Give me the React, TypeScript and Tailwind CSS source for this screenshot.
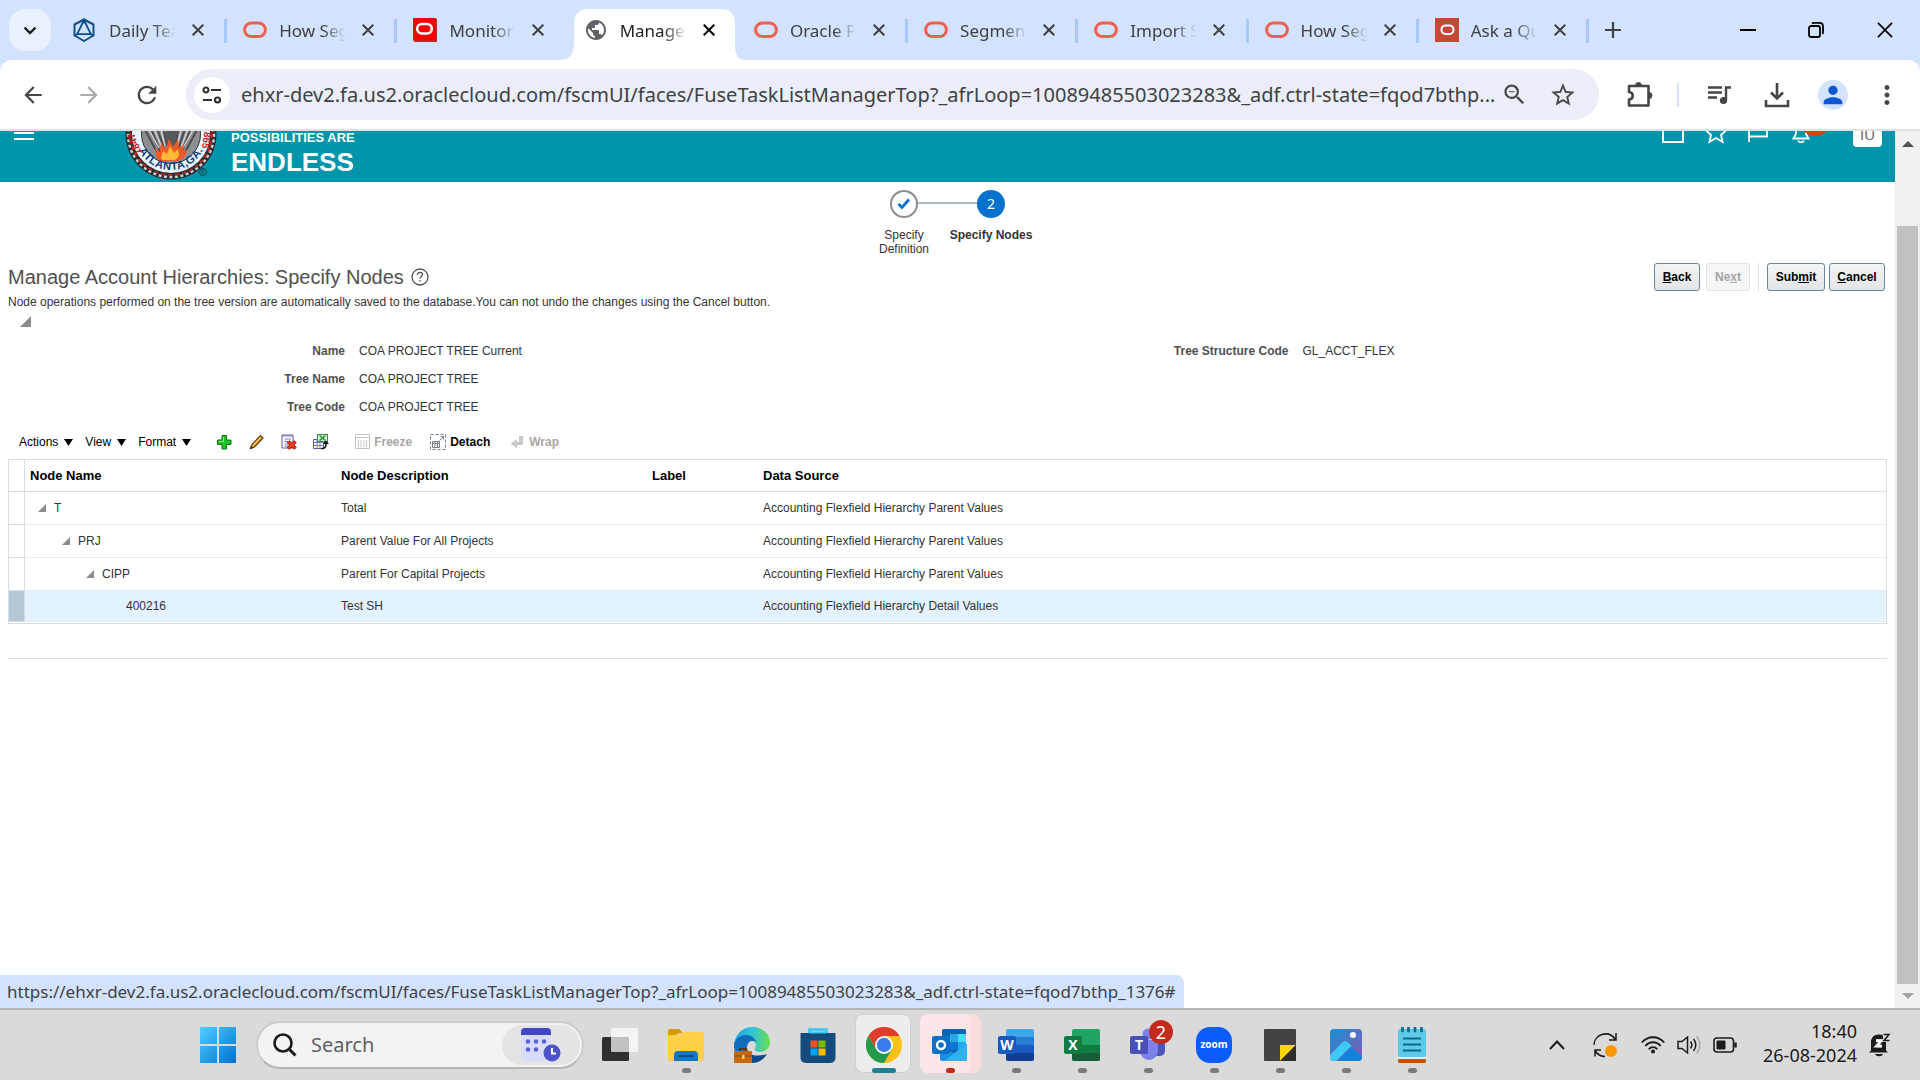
import React from "react";
import {
  MdArrowBack,
  MdArrowForward,
  MdRefresh,
  MdZoomOut,
  MdStarBorder,
  MdPerson,
  MdMoreVert,
  MdPublic,
} from "react-icons/md";

const UI = "font-['Noto_Sans',sans-serif]";
const PAGE_URL =
  "ehxr-dev2.fa.us2.oraclecloud.com/fscmUI/faces/FuseTaskListManagerTop?_afrLoop=10089485503023283&_adf.ctrl-state=fqod7bthp...";
const LINK_URL =
  "https://ehxr-dev2.fa.us2.oraclecloud.com/fscmUI/faces/FuseTaskListManagerTop?_afrLoop=10089485503023283&_adf.ctrl-state=fqod7bthp_1376#";

/* ---------- favicons ---------- */

const OracleRing = () => (
  <svg width="24" height="24" viewBox="0 0 24 24" fill="none">
    <rect x="1.600" y="5" width="20.800" height="13.600" rx="6.800" stroke="#f0604f" strokeWidth="3" />
  </svg>
);
const OracleTile = () => (
  <svg width="24" height="24" viewBox="0 0 24 24" fill="none">
    <rect x="1" y="1" width="23" height="23" fill="#a33" />
    <rect width="23" height="22.500" fill="#fa0000" />
    <rect x="4.200" y="6" width="14.600" height="9.500" rx="4.700" stroke="#fff" strokeWidth="2.600" />
  </svg>
);
const OracleSquare = () => (
  <svg width="24" height="24" viewBox="0 0 24 24" fill="none">
    <rect width="24" height="24" fill="#c74634" />
    <rect x="6.500" y="7.500" width="12" height="8.500" rx="4" stroke="#fff" strokeWidth="2" />
  </svg>
);
const Hexagon = () => (
  <svg width="24" height="24" viewBox="0 0 24 24" fill="none" stroke="#10508a" strokeWidth="1.800" strokeLinejoin="round">
    <path d="M11 1.500 20.500 6.500V17.500L11 23 1.500 17.500V6.500Z" strokeWidth="2" />
    <path d="M11 2 4.200 16.200H17.800Z" />
    <path d="M1.500 17.500 4.200 16.200M20.500 17.500 17.800 16.200" />
    <circle cx="11" cy="3" r="1.500" fill="#10508a" />
  </svg>
);

type Tab = { title: string; icon: React.ReactNode; active?: boolean; noLine?: boolean };
const TABS: Tab[] = [
  { title: "Daily Tea", icon: <Hexagon /> },
  { title: "How Seg", icon: <OracleRing /> },
  { title: "Monitor", icon: <OracleTile />, noLine: true },
  { title: "Manage", icon: <MdPublic className="size-6 text-[#5f6368]" />, active: true, noLine: true },
  { title: "Oracle F", icon: <OracleRing /> },
  { title: "Segmen", icon: <OracleRing /> },
  { title: "Import S", icon: <OracleRing /> },
  { title: "How Seg", icon: <OracleRing /> },
  { title: "Ask a Qu", icon: <OracleSquare /> },
];

const Cross = ({ size = 12, w = 2 }: { size?: number; w?: number }) => (
  <svg width={size} height={size} viewBox="0 0 12 12" fill="none" stroke="currentColor" strokeWidth={w}>
    <path d="M.7.7 11.300 11.300M11.300.7.7 11.300" />
  </svg>
);

function TabStrip() {
  return (
    <div className="flex h-[60px] items-stretch bg-[#d3e3fd] text-[#3c4043]">
      <button aria-label="Search tabs" className="mt-[9px] mr-1.5 ml-[9px] flex h-[42px] w-[42px] shrink-0 items-center justify-center rounded-2xl bg-[#e9f0fe]">
        <svg width="14" height="9" viewBox="0 0 14 9" fill="none" stroke="#1f1f1f" strokeWidth="2.400">
          <path d="m1.500 1.500 5.500 5.500 5.500-5.500" />
        </svg>
      </button>
      <div role="tablist" className="flex w-[1532px] min-w-0">
        {TABS.map((t, i) => (
          <div key={i} role="tab" aria-selected={!!t.active} className="relative flex min-w-0 flex-1 items-center">
            {t.active && (
              <svg className="absolute top-[9px] left-[-9px]" width="186" height="51" viewBox="0 0 186 51" fill="#fff">
                <path d="M0 51c10 0 15-6 15-15V14C15 6 20 0 29 0H162c9 0 14 6 14 14V36c0 9 3 15 10 15Z" />
              </svg>
            )}
            <span className="relative ml-4 w-6 shrink-0">{t.icon}</span>
            <span
              className={
                "relative mt-0.5 ml-3 w-[67px] text-[17px] whitespace-nowrap [mask-image:linear-gradient(to_right,#000_65%,transparent)] " +
                (t.active ? "text-[#1f1f1f]" : "")
              }
            >
              {t.title}
            </span>
            <button aria-label={"Close " + t.title} className={"relative ml-4 shrink-0 " + (t.active ? "text-black" : "")}>
              <Cross />
            </button>
            {!t.noLine && <span className="absolute top-[19px] right-0 h-6 w-[3px] bg-[#a8c7fa]" />}
          </div>
        ))}
      </div>
      <button aria-label="New tab" className="ml-4 flex items-center">
        <svg width="16" height="16" viewBox="0 0 16 16" stroke="currentColor" strokeWidth="2.200">
          <path d="M8 0v16M0 8h16" />
        </svg>
      </button>
      <div className="ml-auto flex text-black">
        <button aria-label="Minimize" className="flex w-[68px] items-center justify-center">
          <svg width="16" height="2" viewBox="0 0 16 2"><rect width="16" height="2" /></svg>
        </button>
        <button aria-label="Restore" className="flex w-[68px] items-center justify-center">
          <svg width="16" height="16" viewBox="0 0 16 16" fill="none" stroke="currentColor" strokeWidth="1.800">
            <rect x="1" y="4" width="11" height="11" rx="2" />
            <path d="M4 1.500c.5-.4 1-.6 2-.6h5.500c2 0 3.500 1.500 3.500 3.500V10c0 1-.2 1.500-.6 2" />
          </svg>
        </button>
        <button aria-label="Close window" className="flex w-[70px] items-center justify-center">
          <Cross size={16} w={1.3} />
        </button>
      </div>
    </div>
  );
}

function AddressBar() {
  return (
    <div className="bg-[#d3e3fd]">
      <div className="flex h-[71px] items-center rounded-t-xl border-b-2 border-[#dfe1e3] bg-white text-[#444746]">
        <button aria-label="Back" className="ml-[19px] flex w-7 justify-center"><MdArrowBack className="size-[26px]" /></button>
        <button aria-label="Forward" className="ml-7 flex w-7 justify-center text-[#a9abaa]"><MdArrowForward className="size-[26px]" /></button>
        <button aria-label="Reload" className="ml-[30px] flex w-7 justify-center"><MdRefresh className="size-7" /></button>
        <div className="ml-[25px] flex h-[51px] min-w-0 flex-1 items-center rounded-full bg-[#ebeef8]">
          <button aria-label="View site information" className="ml-2 flex size-9 shrink-0 items-center justify-center rounded-full bg-white">
            <svg width="20" height="18" viewBox="0 0 20 18" fill="none" stroke="#303030" strokeWidth="2.200">
              <circle cx="4" cy="4" r="2.500" /><path d="M9 4h10M1 14h9" /><circle cx="15.500" cy="14" r="2.500" />
            </svg>
          </button>
          <input
            aria-label="Address"
            readOnly
            value={PAGE_URL}
            className={UI + " ml-[11px] min-w-0 flex-1 bg-transparent text-xl text-[#3f4143] outline-none"}
          />
          <button aria-label="Zoom" className="mr-[21px] ml-0.5"><MdZoomOut className="size-[27px]" /></button>
          <button aria-label="Bookmark" className="mr-[22px]"><MdStarBorder className="size-7" /></button>
        </div>
        <button aria-label="Extensions" className="ml-7">
          <svg width="26" height="27" viewBox="0 0 26 27" fill="none" stroke="currentColor" strokeWidth="2.600" strokeLinejoin="round">
            <path d="M2 5h19.500v19.500H2v-6c5-.5 5-7 0-7.500Z" />
            <path d="M8.500 4.500a3 3 0 0 1 6 0ZM22 11.500a3 3 0 0 1 0 6Z" fill="currentColor" strokeWidth="1" />
          </svg>
        </button>
        <span className="ml-6 h-6 w-0.5 bg-[#d3e3fd]" />
        <button aria-label="Media controls" className="ml-7">
          <svg width="25" height="20" viewBox="0 0 25 20" fill="none" stroke="currentColor" strokeWidth="2.400">
            <path d="M1 2.500h14M1 7.500h14M1 12.500h9M19 15V2.500h5" />
            <circle cx="16.500" cy="15.500" r="3.600" fill="currentColor" stroke="none" />
          </svg>
        </button>
        <button aria-label="Downloads" className="ml-8">
          <svg width="26" height="26" viewBox="0 0 26 26" fill="none" stroke="currentColor" strokeWidth="2.600">
            <path d="M13 1v15M7 10.500l6 6 6-6M2 18v6h22v-6" />
          </svg>
        </button>
        <button aria-label="Profile" className="ml-7 flex size-[30px] items-center justify-center rounded-full bg-[#d3e3fd] text-[#0b57d0]">
          <MdPerson className="size-7" />
        </button>
        <button aria-label="Menu" className="mr-[18px] ml-6"><MdMoreVert className="size-[30px]" /></button>
      </div>
    </div>
  );
}

/* ---------- application header ---------- */

const Seal = () => (
  <svg width="96" height="92" viewBox="0 0 96 92" className="shrink-0">
    <defs>
      <path id="sealArc" d="M13 46a33 33 0 0 0 66 0" />
    </defs>
    <circle cx="46" cy="46" r="45.500" fill="#2b2b2b" />
    <circle cx="46" cy="46" r="43" fill="none" stroke="#c9d3d6" strokeWidth="2.500" strokeDasharray="3 2.500" />
    <circle cx="46" cy="46" r="41" fill="none" stroke="#b3292c" strokeWidth="2" strokeDasharray="4 3" />
    <circle cx="46" cy="46" r="39" fill="#e6f6fc" />
    <circle cx="46" cy="46" r="29.500" fill="#8d8f92" stroke="#333" />
    <path d="M20 42 33 66M25 38l11 28M31 38l9 24M38 38l4 20M54 38l-4 20M61 38l-8 24M67 38 56 66M72 42 59 66" stroke="#4a4c4f" strokeWidth="2" />
    <path d="M23 40 34 60M28 38l10 24M35 38l5 20M57 38l-5 20M64 38l-9 24M69 40 58 60" stroke="#d9dadb" strokeWidth="1.200" />
    <path d="M40 38h12l-2 20-4 6-4-6Z" fill="#55575a" />
    <path d="M32 71l-2-11 5 4 1-9 5 6 3-10 4 8 5-8 1 9 5-4-1 8 5-3-4 9-6 3H37Z" fill="#f0592a" />
    <path d="M36 71l2-8 4 3 3-8 4 7 4-4 1 7-4 4H39Z" fill="#ffb833" />
    <text className="font-['Liberation_Sans',sans-serif] text-[11px] font-bold" fill="#123a7a">
      <textPath href="#sealArc" startOffset="50%" textAnchor="middle" dominantBaseline="middle">ATLANTA,GA.</textPath>
    </text>
    <text transform="translate(17 65) rotate(-112)" className="font-['Liberation_Sans',sans-serif] text-[10px] font-bold" fill="#c8202a">1847</text>
    <text transform="translate(80 38) rotate(98)" className="font-['Liberation_Sans',sans-serif] text-[10px] font-bold" fill="#c8202a">1865</text>
    <circle cx="78" cy="84" r="3.500" fill="none" stroke="#14404c" />
    <text x="76" y="86" className="font-['Liberation_Sans',sans-serif] text-[5px]" fill="#14404c">R</text>
  </svg>
);

function AppHeader() {
  return (
    <header className="flex h-[51px] items-start overflow-hidden bg-[#0095ab] text-white">
      <button aria-label="Navigator" className="ml-3.5">
        <svg width="20" height="11" viewBox="0 0 20 11" fill="#fff"><path d="M0 1h20v2H0zM0 7h20v2H0z" /></svg>
      </button>
      <div className="ml-[91px] flex h-[49px] items-end">
        <Seal />
        <div className="ml-2.5 flex flex-col font-['Liberation_Sans',sans-serif] font-bold">
          <span className="text-[13px] leading-[14px] whitespace-nowrap">POSSIBILITIES ARE</span>
          <span className="text-[26px] leading-[35px]">ENDLESS</span>
        </div>
      </div>
      <div className="ml-auto flex items-start">
        <button aria-label="Home" className="mr-[21px]">
          <svg width="22" height="13" viewBox="0 0 22 13" fill="none" stroke="#fff" strokeWidth="2"><path d="M1-4v15h20V-4" /></svg>
        </button>
        <button aria-label="Favorites" className="mr-[21px]">
          <svg width="22" height="13" viewBox="0 0 22 13" fill="none" stroke="#fff" strokeWidth="1.800"><path d="M0-1.500 6 4 4.500 11 11 7l6.500 4L16 4l6-5.500" /></svg>
        </button>
        <button aria-label="Watchlist" className="mr-6">
          <svg width="20" height="13" viewBox="0 0 20 13" fill="none" stroke="#fff" strokeWidth="1.800"><path d="M1-2v13M1 5.500h18V-2" /></svg>
        </button>
        <button aria-label="Notifications" className="mr-[27px]">
          <svg width="34" height="13" viewBox="0 0 34 13" fill="none" stroke="#fff" strokeWidth="1.800">
            <path d="M4-2v5L1.500 7.500h15L14 3v-5M6 9.500c1 2.500 5 2.500 6 0" />
            <ellipse cx="23" cy="-5" rx="13" ry="10" fill="#d04a02" stroke="none" />
          </svg>
        </button>
        <button aria-label="User menu" className="mr-[13px] flex h-4 w-[29px] items-end justify-center rounded-b bg-white font-['Liberation_Sans',sans-serif] text-[15px] leading-[24px] text-[#6b6b6b]">
          IU
        </button>
      </div>
    </header>
  );
}

/* ---------- page body ---------- */

function Stepper() {
  return (
    <ol className="flex justify-center pt-2 text-center text-xs leading-[14px] text-[#333]">
      <li className="relative flex w-[87px] flex-col items-center gap-2.5">
        <span className="absolute top-3 left-1/2 h-0.5 w-full bg-[#aab7c1]" />
        <span className="relative flex size-7 items-center justify-center rounded-full border-2 border-[#878d93] bg-white">
          <svg width="14" height="12" viewBox="0 0 14 12" fill="none" stroke="#0572ce" strokeWidth="2.800"><path d="m1.500 6 3.500 3.500L12 1.500" /></svg>
        </span>
        <a href="#definition" className="w-14">Specify Definition</a>
      </li>
      <li className="relative flex w-[87px] flex-col items-center gap-2.5">
        <span className={UI + " flex size-7 items-center justify-center rounded-full bg-[#0572ce] text-sm text-white"}>2</span>
        <span className="font-bold">Specify Nodes</span>
      </li>
    </ol>
  );
}

const btn = "h-7 rounded-[3px] border border-[#6e8599] bg-linear-to-b from-[#f3f4f5] to-[#e2e5e8] text-xs font-bold text-black";

function Field({ label, value }: { label: string; value: string }) {
  return (
    <div className="flex h-7 items-center gap-3.5">
      <dt className="w-[345px] text-right font-bold text-[#4f4f4f]">{label}</dt>
      <dd className="text-[#333]">{value}</dd>
    </div>
  );
}

const Menu = ({ label, className }: { label: string; className: string }) => (
  <button className={"flex items-center gap-1.5 " + className}>
    {label}
    <svg width="9" height="7" viewBox="0 0 9 7" className="mt-0.5"><path d="M0 0h9L4.500 7Z" /></svg>
  </button>
);

function Toolbar() {
  return (
    <div className="mt-[3px] flex h-[35px] items-center pl-[11px] text-xs text-black">
      <Menu label="Actions" className="mr-3" />
      <Menu label="View" className="mr-3" />
      <Menu label="Format" className="mr-[25px]" />
      <button aria-label="Add" className="mr-[17px]">
        <svg width="16" height="16" viewBox="0 0 16 16"><path d="M6 1.500h4.500V6H15v4.500h-4.500V15H6v-4.500H1.500V6H6Z" fill="#1fc01f" stroke="#0a7a12" /><path d="M7.500 3v4.500H3" stroke="#8df08a" fill="none" /></svg>
      </button>
      <button aria-label="Edit" className="mr-4">
        <svg width="16" height="16" viewBox="0 0 16 16"><path d="M1.500 14.500 3 10.500 11.500 1.500l2.500 2.500L5.500 13Z" fill="#f8a823" stroke="#5b3a10" strokeWidth="1.200" /><path d="M4 11 12 3" stroke="#ffe28a" /><path d="m1 15 1-3 2 2Z" fill="#222" /></svg>
      </button>
      <button aria-label="Delete" className="mr-4">
        <svg width="16" height="16" viewBox="0 0 16 16"><path d="M1 1h11v13H1Z" fill="#fff" stroke="#5a5aa0" /><path d="M1 2h11M3.500 5H10M3.500 7.500H10M3.500 10H8M3.500 12H7" stroke="#7b7bbd" /><path d="m7 7.500 7.500 7M14.500 7.500l-7.500 7" stroke="#8f0e00" strokeWidth="3.600" /><path d="m7 7.500 7.500 7M14.500 7.500l-7.500 7" stroke="#ff3b14" strokeWidth="2.200" /></svg>
      </button>
      <button aria-label="Export to Excel" className="mr-[26px]">
        <svg width="16" height="16" viewBox="0 0 16 16" fill="none"><path d="M.5 5.500h10v9H.5Z" fill="#fff" stroke="#5a5aa0" /><path d="M1 8.500h9M1 11.500h9M4 6v8M7 6v8" stroke="#7b7bbd" /><rect x="4.500" y=".5" width="10" height="7" fill="#e4f4e4" stroke="#3a8a3a" /><path d="m6.500 1.500 6 5M12.500 1.500l-6 5" stroke="#1e8a2a" strokeWidth="1.600" /><path d="M8 14.500c4 .5 5-1.500 5-5.500" stroke="#111" strokeWidth="1.600" /><path d="m10 10 3-3.500L16 10Z" fill="#111" /></svg>
      </button>
      <button disabled className="mr-[18px] flex items-center gap-1 font-bold text-[#a6a6a6]">
        <svg width="15" height="15" viewBox="0 0 15 15" fill="none" stroke="#c3c3c3"><path d="M.5.500h14v14H.5ZM1 3.500h13M3.500 6v7M6 6v7M9 6v7M11.500 6v7" /></svg>
        Freeze
      </button>
      <button className="mr-5 flex items-center gap-1 font-bold">
        <svg width="16" height="16" viewBox="0 0 16 16" fill="none" stroke="#777f87"><rect x=".5" y=".5" width="15" height="15" strokeDasharray="3 2" /><path d="M2.500 7.500h7v6h-7ZM2.500 9.500h7M5 8v5M7.500 8v5M9.500 6.500l4-4M10.500 2.500h3v3" /></svg>
        Detach
      </button>
      <button disabled className="flex items-center gap-[5px] font-bold text-[#a6a6a6]">
        <svg width="14" height="14" viewBox="0 0 14 14"><path d="M9 1h4v9H7v3.500L.5 8.500 7 4v3h2Z" fill="#c9c9c9" /></svg>
        Wrap
      </button>
    </div>
  );
}

const ROWS = [
  { name: "T", desc: "Total", src: "Accounting Flexfield Hierarchy Parent Values", pad: "pl-[13px]" },
  { name: "PRJ", desc: "Parent Value For All Projects", src: "Accounting Flexfield Hierarchy Parent Values", pad: "pl-[37px]" },
  { name: "CIPP", desc: "Parent For Capital Projects", src: "Accounting Flexfield Hierarchy Parent Values", pad: "pl-[61px]" },
  { name: "400216", desc: "Test SH", src: "Accounting Flexfield Hierarchy Detail Values", pad: "pl-[101px]", leaf: true },
];

function NodeTable() {
  return (
    <div className="border border-[#d6dfe6] pb-px">
      <table className="w-full table-fixed border-separate border-spacing-0 text-left text-xs text-[#333]">
        <colgroup>
          <col className="w-4" />
          <col className="w-[310px]" />
          <col className="w-[311px]" />
          <col className="w-[111px]" />
          <col />
        </colgroup>
        <thead>
          <tr className="h-8 text-[13px] text-black">
            <td className="border-r border-b border-[#d6dfe6]" />
            <th className="border-b border-[#d6dfe6] pl-[5px]">Node Name</th>
            <th className="border-b border-[#d6dfe6] pl-1.5">Node Description</th>
            <th className="border-b border-[#d6dfe6] pl-1.5">Label</th>
            <th className="border-b border-[#d6dfe6] pl-1.5">Data Source</th>
          </tr>
        </thead>
        <tbody>
          {ROWS.map((r) => (
            <tr key={r.name} className={r.leaf ? "h-[31px] bg-[#e4f1fe]" : "h-[33px]"}>
              <td className={"border-r border-b border-[#d6dfe6] " + (r.leaf ? "bg-[#b5c8d6]" : "")} />
              <td className={"border-b border-[#e9ebed] " + r.pad}>
                <span className="flex items-center gap-2">
                  {!r.leaf && (
                    <button aria-label={"Collapse " + r.name}>
                      <svg width="8" height="8" viewBox="0 0 8 8" fill="#878d93" className="block"><path d="M8 0v8H0Z" /></svg>
                    </button>
                  )}
                  {r.name}
                </span>
              </td>
              <td className="border-b border-[#e9ebed] pl-1.5">{r.desc}</td>
              <td className="border-b border-[#e9ebed]" />
              <td className="border-b border-[#e9ebed] pl-1.5">{r.src}</td>
            </tr>
          ))}
        </tbody>
      </table>
    </div>
  );
}

function Page() {
  return (
    <main className="min-w-0 flex-1 overflow-hidden bg-white font-['Liberation_Sans',sans-serif]">
      <AppHeader />
      <Stepper />
      <div className="mt-1.5 flex h-[30px] items-center pr-2.5 pl-2">
        <h1 className="text-xl text-[#4f4f4f]">Manage Account Hierarchies: Specify Nodes</h1>
        <button aria-label="Help" className="ml-[7px]">
          <svg width="18" height="18" viewBox="0 0 18 18" fill="none" stroke="#4f4f4f" strokeWidth="1.300"><circle cx="9" cy="9" r="8" /><path d="M6.500 7c0-3.500 5-3.500 5-.5 0 1.800-2.500 2-2.500 4M9 12v1.600" /></svg>
        </button>
        <button className={btn + " ml-auto w-[46px]"}><u>B</u>ack</button>
        <button disabled className="ml-1.5 h-7 w-11 rounded-[3px] border border-[#dfe4e8] bg-[#f5f6f7] text-xs font-bold text-[#a3a3a3]">Ne<u>x</u>t</button>
        <span className="mx-2 h-7 w-px bg-[#d6dfe6]" />
        <button className={btn + " w-[58px]"}>Sub<u>m</u>it</button>
        <button className={btn + " ml-1 w-14"}><u>C</u>ancel</button>
      </div>
      <p className="mt-0.5 pl-2 text-xs text-[#333]">
        Node operations performed on the tree version are automatically saved to the database.You can not undo the changes using the Cancel button.
      </p>
      <button aria-label="Collapse details" className="mt-1.5 ml-5 block">
        <svg width="11" height="11" viewBox="0 0 11 11" fill="#878d93" className="block"><path d="M11 0v11H0Z" /></svg>
      </button>
      <dl className="mr-2 grid grid-cols-2 pt-2.5 text-xs">
        <div>
          <Field label="Name" value="COA PROJECT TREE Current" />
          <Field label="Tree Name" value="COA PROJECT TREE" />
          <Field label="Tree Code" value="COA PROJECT TREE" />
        </div>
        <div>
          <Field label="Tree Structure Code" value="GL_ACCT_FLEX" />
        </div>
      </dl>
      <div className="pr-2 pl-2">
        <Toolbar />
        <NodeTable />
        <hr className="mt-[34px] border-[#d6dfe6]" />
      </div>
    </main>
  );
}

function Scrollbar() {
  return (
    <div className="flex w-[25px] shrink-0 flex-col items-center bg-[#f1f1f1]">
      <svg width="12" height="6" viewBox="0 0 12 6" fill="#505050" className="mt-2.5 mb-[79px] shrink-0"><path d="M0 6 6 0l6 6Z" /></svg>
      <div className="w-[21px] flex-1 bg-[#c1c1c1]" />
      <svg width="12" height="6" viewBox="0 0 12 6" fill="#a3a3a3" className="my-[9px] shrink-0"><path d="m0 0 6 6 6-6Z" /></svg>
    </div>
  );
}

/* ---------- taskbar ---------- */

const Office = ({ letter, c }: { letter: string; c: string[] }) => (
  <svg width="36" height="34" viewBox="0 0 36 34">
    <rect x="8" y="1" width="28" height="32" rx="2" fill={c[0]} />
    <rect x="8" y="9" width="28" height="8" fill={c[1]} />
    <rect x="8" y="17" width="28" height="8" fill={c[2]} />
    <path d="M8 25h28v6a2 2 0 0 1-2 2H10a2 2 0 0 1-2-2Z" fill={c[3]} />
    <rect y="8" width="18" height="18" rx="2" fill={c[4]} />
    <text x="9" y="22" textAnchor="middle" className="font-['Open_Sans',sans-serif] text-[14px] font-bold" fill="#fff">{letter}</text>
  </svg>
);

const TaskView = () => (
  <svg width="36" height="36" viewBox="0 0 36 36">
    <rect x="0" y="10" width="27" height="24" rx="1.500" fill="#2f2f2f" />
    <rect x="9" y="1" width="27" height="24" rx="1.500" fill="#fff" opacity=".7" />
  </svg>
);
const Explorer = () => (
  <svg width="36" height="34" viewBox="0 0 36 34">
    <path d="M0 3a2 2 0 0 1 2-2h9l4 4h-3L0 10Z" fill="#d99a00" />
    <path d="M0 7h11l4-3h19a2 2 0 0 1 2 2v27H0Z" fill="#ffcf48" />
    <path d="M6 33v-6a4 4 0 0 1 4-4h16a4 4 0 0 1 4 4v6Z" fill="#1175c8" />
    <path d="M11 28h14" stroke="#0a4d94" strokeWidth="2" strokeLinecap="round" />
  </svg>
);
const Edge = () => (
  <svg width="36" height="36" viewBox="0 0 36 36">
    <defs>
      <linearGradient id="edgeTop" x1="0" x2="1"><stop offset="0" stopColor="#1fa2e6" /><stop offset=".55" stopColor="#33c6cf" /><stop offset="1" stopColor="#6be04b" /></linearGradient>
    </defs>
    <path d="M0 18C1 8 8 0 18 0s18 7 18 15c0 6-4 10-10 10-4 0-6-2-5-4 2-3 1-7-4-7C9 14 3 17 0 18Z" fill="url(#edgeTop)" />
    <path d="M0 18c1-6 6-10 12-10 5 0 9 3 10 7-4-3-9 0-9 6 0 6 6 10 13 9-5 6-12 6-16 5C4 33 0 26 0 18Z" fill="#0f6cbd" />
    <path d="M13 21c0 6 7 10 20 6-4 7-10 9-15 9-4-2-6-9-5-15Z" fill="#114a8b" />
    <rect x="0" y="24" width="18" height="12" rx="1" fill="#c7690a" />
    <path d="M6 24v-2h6v2" fill="none" stroke="#6b3305" strokeWidth="2" /><path d="M0 29h18" stroke="#8c4606" /><rect x="8" y="28" width="2.500" height="4" fill="#ffd24a" />
  </svg>
);
const Store = () => (
  <svg width="36" height="36" viewBox="0 0 36 36">
    <path d="M9.500 8V2.500h17V8" fill="none" stroke="#35c5f5" strokeWidth="2.500" />
    <path d="M.5 6h35v25a5 5 0 0 1-5 5h-25a5 5 0 0 1-5-5Z" fill="#164a7c" />
    <path d="M9.500 5.500h17" stroke="#35c5f5" strokeWidth="2" />
    <rect x="10.500" y="13.500" width="7" height="7" fill="#f25022" /><rect x="18.500" y="13.500" width="7" height="7" fill="#7fba00" />
    <rect x="10.500" y="21.500" width="7" height="7" fill="#00a4ef" /><rect x="18.500" y="21.500" width="7" height="7" fill="#ffb900" />
  </svg>
);
const Chrome = () => (
  <svg width="36" height="36" viewBox="0 0 36 36">
    <circle cx="18" cy="18" r="18" fill="#fbc116" />
    <path d="M2.400 9A18 18 0 0 1 33.600 9H18L10.200 22.500Z" fill="#e33b2e" />
    <path d="M2.400 9A18 18 0 0 0 18 36l7.800-13.500H10.200Z" fill="#219a4c" />
    <circle cx="18" cy="18" r="9" fill="#fff" /><circle cx="18" cy="18" r="7.200" fill="#3b7ded" />
  </svg>
);
const Outlook = () => (
  <svg width="36" height="34" viewBox="0 0 36 34">
    <rect x="10" y="1" width="24" height="24" rx="1.500" fill="#0a64ad" />
    <rect x="18" y="6" width="8" height="8" fill="#28a8ea" /><rect x="26" y="6" width="8" height="8" fill="#50d9ff" />
    <rect x="18" y="14" width="8" height="8" fill="#0f78d4" /><rect x="26" y="14" width="8" height="8" fill="#28a8ea" />
    <path d="M8 18 22 25 35 16v15a2 2 0 0 1-2 2H10a2 2 0 0 1-2-2Z" fill="#1a90e0" />
    <path d="M35 16 12 33h21a2 2 0 0 0 2-2Z" fill="#35b1f1" />
    <rect y="8" width="18" height="18" rx="2" fill="#0c6fc9" />
    <circle cx="9" cy="17" r="4" fill="none" stroke="#fff" strokeWidth="2.400" />
  </svg>
);
const Teams = () => (
  <svg width="36" height="34" viewBox="0 0 36 34">
    <rect x="22" y="12" width="13" height="16" rx="5" fill="#4b53bc" />
    <circle cx="18" cy="6" r="5.500" fill="#7b83eb" />
    <path d="M10 12h18v11a9 9 0 0 1-18 0Z" fill="#7b83eb" />
    <rect y="8" width="18" height="18" rx="2" fill="#4a50b8" />
    <text x="9" y="22" textAnchor="middle" className="font-['Open_Sans',sans-serif] text-[14px] font-bold" fill="#fff">T</text>
  </svg>
);
const Zoom = () => (
  <svg width="36" height="36" viewBox="0 0 36 36">
    <rect width="36" height="36" rx="14" fill="#0b5cff" />
    <text x="18" y="21" textAnchor="middle" className="font-['Open_Sans',sans-serif] text-[10px] font-bold" fill="#fff">zoom</text>
  </svg>
);
const Sticky = () => (
  <svg width="32" height="32" viewBox="0 0 32 32"><rect width="32" height="32" rx="1" fill="#434343" /><path d="M16 16h16L16 32Z" fill="#ffd60a" /><path d="M32 16v16H16Z" fill="#2d2d2d" /></svg>
);
const Photos = () => (
  <svg width="32" height="32" viewBox="0 0 32 32">
    <defs><linearGradient id="photoBg" x1="0" x2="1" y1="0" y2="1"><stop offset="0" stopColor="#1790d6" /><stop offset="1" stopColor="#8a58b0" /></linearGradient></defs>
    <rect width="32" height="32" rx="4" fill="url(#photoBg)" /><circle cx="23" cy="6" r="3" fill="#fff" />
    <path d="M8 32 21 18l11 9v1a4 4 0 0 1-4 4Z" fill="#1282da" />
    <path d="M0 26 13 13c1.500-1.500 3-1.500 4.500 0l4 4L6 32H4a4 4 0 0 1-4-4Z" fill="#3ccbf4" />
  </svg>
);
const Notepad = () => (
  <svg width="28" height="36" viewBox="0 0 28 36">
    <rect y="32" width="28" height="4" rx="1" fill="#b8590b" /><rect y="28" width="28" height="4" fill="#e9eef0" />
    <rect y="2" width="28" height="28" rx="2" fill="#5fc9e8" />
    <path d="M5 11.500h18M5 17.500h18M5 23.500h18" stroke="#086a92" strokeWidth="2" />
    <path d="M4.500 1v3M10.500 1v3M17 1v3M23.500 1v3" stroke="#086a92" strokeWidth="2.800" strokeLinecap="round" />
  </svg>
);

const dotGray = "h-[5px] w-[9px] bg-[#7b7b7b]";
const APPS: { name: string; icon: React.ReactNode; dot?: string; tile?: string; badge?: string }[] = [
  { name: "Task view", icon: <TaskView /> },
  { name: "File Explorer", icon: <Explorer />, dot: dotGray },
  { name: "Edge", icon: <Edge /> },
  { name: "Store", icon: <Store /> },
  { name: "Chrome", icon: <Chrome />, dot: "h-[5px] w-6 bg-[#21808d]", tile: "left-1 w-14 border border-[#cfcfcf] bg-[#ededed]" },
  { name: "Outlook", icon: <Outlook />, dot: "h-[5px] w-[9px] bg-[#c42b1c]", tile: "left-[3px] w-[51px] bg-[#fde6e7]" },
  { name: "Word", icon: <Office letter="W" c={["#41a5ee", "#2b7cd3", "#185abd", "#103f91", "#185abd"]} />, dot: dotGray },
  { name: "Excel", icon: <Office letter="X" c={["#21a366", "#21a366", "#107c41", "#185c37", "#107c41"]} />, dot: dotGray },
  { name: "Teams", icon: <Teams />, dot: dotGray, badge: "2" },
  { name: "Zoom", icon: <Zoom />, dot: dotGray },
  { name: "Sticky Notes", icon: <Sticky />, dot: dotGray },
  { name: "Photos", icon: <Photos />, dot: dotGray },
  { name: "Notepad", icon: <Notepad />, dot: dotGray },
];

function Taskbar() {
  return (
    <footer className={UI + " flex h-[72px] shrink-0 items-stretch border-t-2 border-[#b3b5b4] bg-[#dadada] text-[#1b1b1b]"}>
      <button aria-label="Start" className="ml-[200px] flex items-center">
        <svg width="36" height="36" viewBox="0 0 36 36">
          <defs><linearGradient id="win" x1="0" x2="1" y1="0" y2="1"><stop offset="0" stopColor="#4fd0ff" /><stop offset="1" stopColor="#0070cf" /></linearGradient></defs>
          <path d="M0 1a1 1 0 0 1 1-1h16v17H0ZM19 0h16a1 1 0 0 1 1 1v16H19ZM0 19h17v17H1a1 1 0 0 1-1-1ZM19 19h17v16a1 1 0 0 1-1 1H19Z" fill="url(#win)" />
        </svg>
      </button>
      <label className="my-auto ml-5 flex h-[48px] w-[328px] items-center rounded-full border-2 border-[#cdcdcd] border-b-[#b5b5b5] bg-[#f3f3f3]">
        <svg width="24" height="24" viewBox="0 0 24 24" fill="none" stroke="#1b1b1b" strokeWidth="2.600" className="ml-[15px] shrink-0"><circle cx="10" cy="10" r="8.500" /><path d="m16 16 6.500 6.500" strokeWidth="3" /></svg>
        <input aria-label="Search" placeholder="Search" className="ml-3.5 min-w-0 flex-1 bg-transparent text-xl outline-none placeholder:text-[#5f5f5f]" />
        <span className="mr-0.5 flex h-10 w-[78px] items-center justify-center rounded-full bg-[#e4e4e4]">
          <svg width="40" height="34" viewBox="0 0 40 34">
            <rect width="30" height="32" y="1" rx="4" fill="#d9dcf8" /><path d="M0 7V4a4 4 0 0 1 4-4h22a4 4 0 0 1 4 4v3Z" fill="#4248c0" />
            <g fill="#5b62d8"><circle cx="7" cy="13.500" r="2.300" /><circle cx="15" cy="13.500" r="2.300" /><circle cx="23" cy="13.500" r="2.300" /><circle cx="7" cy="21.500" r="2.300" /><circle cx="15" cy="21.500" r="2.300" /></g>
            <circle cx="31" cy="25" r="8.500" fill="#4d53cb" /><path d="M31 20v5.500h4" stroke="#fff" strokeWidth="2" fill="none" />
          </svg>
        </span>
      </label>
      <div className="ml-[3px] flex">
        {APPS.map((a) => (
          <button key={a.name} aria-label={a.name} className="relative flex w-[66px] items-center justify-center">
            {a.name === "Outlook" && <span className="absolute top-1 left-10 h-[59px] w-6 rounded-lg bg-[#f9dcdd]" />}
            {a.tile && <span className={"absolute top-1 h-[59px] rounded-lg " + a.tile} />}
            <span className="relative">{a.icon}</span>
            {a.dot && <span className={"absolute bottom-[7px] rounded-full " + a.dot} />}
            {a.badge && (
              <span className="absolute top-2.5 right-2 flex size-6 items-center justify-center rounded-full bg-[#c42b1c] text-lg leading-6 text-white">{a.badge}</span>
            )}
          </button>
        ))}
      </div>
      <div className="mr-[29px] ml-auto flex items-center">
        <button aria-label="Show hidden icons" className="mr-7">
          <svg width="16" height="10" viewBox="0 0 16 10" fill="none" stroke="#1b1b1b" strokeWidth="2"><path d="m1 9 7-7.500L15 9" /></svg>
        </button>
        <button aria-label="Updates" className="mr-6">
          <svg width="24" height="26" viewBox="0 0 24 26" fill="none" stroke="#1b1b1b" strokeWidth="1.500">
            <path d="M1 13C1 3 15-3 22.500 7.500M23 1v7h-7M2 24.500V18h6M2 18.500c3 5 7 6 10 6" /><circle cx="18" cy="19" r="6" fill="#ff9800" stroke="none" />
          </svg>
        </button>
        <button aria-label="Network" className="mr-3">
          <svg width="24" height="18" viewBox="0 0 24 18" fill="none" stroke="#1b1b1b" strokeWidth="1.800"><path d="M.8 6.500c6-7 16.400-7 22.400 0M4.300 10c4.200-5 11.200-5 15.400 0M7.700 13.300c2.300-2.800 6.300-2.800 8.600 0" /><circle cx="12" cy="15.500" r="2" fill="#1b1b1b" stroke="none" /></svg>
        </button>
        <button aria-label="Volume" className="mr-3">
          <svg width="24" height="20" viewBox="0 0 24 20" fill="none" stroke="#1b1b1b" strokeWidth="1.500"><path d="M1 6.500h4L10.500 2v16L5 13.500H1ZM13.500 6.500c1.500 2 1.500 5 0 7M16.500 4c3 3.500 3 8.500 0 12" /><path d="M19.500 1.500c4.500 5 4.500 12 0 17" stroke="#aaa" /></svg>
        </button>
        <button aria-label="Battery" className="mr-[26px]">
          <svg width="24" height="16" viewBox="0 0 24 16" fill="none" stroke="#1b1b1b" strokeWidth="1.600"><rect x="1" y="1" width="19.500" height="14" rx="3" /><rect x="3.500" y="3.500" width="9" height="9" rx="1" fill="#1b1b1b" stroke="none" /><path d="M22.500 5.500v5" strokeWidth="2.500" /></svg>
        </button>
        <button className="mr-3 pb-1 text-right text-lg leading-6">18:40<br />26-08-2024</button>
        <button aria-label="Do not disturb">
          <svg width="22" height="24" viewBox="0 0 22 24" fill="#1b1b1b">
            <path d="M2 17.500V9C2 4.500 5 1.500 10 1.500c2 0 3 .5 4 1v3L17 9v8.500l2 2H0ZM6 21h8c-1 3-7 3-8 0Z" />
            <path d="M7 7.500h5.500L7.500 13H13M14.500 1.500H20L15 7.500h5.500" fill="none" stroke="#dadada" strokeWidth="3" />
            <path d="M7 8h5L7.500 13.500H13" fill="none" stroke="#fff" strokeWidth="1.400" />
            <path d="M14.500 1.500H20L15 7.500h5.500" fill="none" stroke="#1b1b1b" strokeWidth="1.500" />
          </svg>
        </button>
      </div>
    </footer>
  );
}

export default function App() {
  return (
    <div className="flex h-screen flex-col overflow-hidden bg-white">
      <div className={UI}>
        <TabStrip />
        <AddressBar />
      </div>
      <div className="relative flex min-h-0 flex-1">
        <Page />
        <Scrollbar />
        <div className={UI + " absolute bottom-0 left-0 flex h-[33px] items-center rounded-tr-lg bg-[#d3e3fd] pr-2 pl-[7px] text-[17px] whitespace-nowrap text-[#3f4143]"}>
          {LINK_URL}
        </div>
      </div>
      <Taskbar />
    </div>
  );
}
